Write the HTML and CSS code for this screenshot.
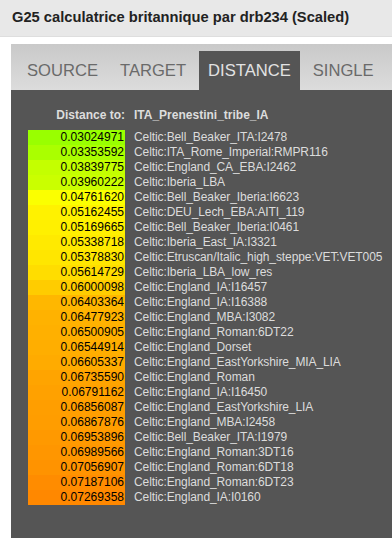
FILE: index.html
```html
<!DOCTYPE html>
<html>
    <head>
        <meta charset="utf-8">
        <title>G25 calculatrice britannique</title>
        <link rel="stylesheet" href="styles.css">
    </head>
    <body>
        <div class="topbar">G25 calculatrice britannique par drb234 (Scaled)</div>
        <div id="panel">
            <div class="tabs">
                <span class="tab">SOURCE</span>
                <span class="tab">TARGET</span>
                <span class="tab active">DISTANCE</span>
                <span class="tab">SINGLE</span>
            </div>
            <div class="content">
                <table class="dist">
                    <tr class="head"><th>Distance to:</th><th>ITA_Prenestini_tribe_IA</th></tr>
                    <tr><td class="val" style="background:hsl(84,100%,50%)">0.03024971</td><td>Celtic:Bell_Beaker_ITA:I2478</td></tr>
                    <tr><td class="val" style="background:hsl(80,100%,50%)">0.03353592</td><td>Celtic:ITA_Rome_Imperial:RMPR116</td></tr>
                    <tr><td class="val" style="background:hsl(74,100%,50%)">0.03839775</td><td>Celtic:England_CA_EBA:I2462</td></tr>
                    <tr><td class="val" style="background:hsl(72.5,100%,50%)">0.03960222</td><td>Celtic:Iberia_LBA</td></tr>
                    <tr><td class="val" style="background:hsl(61,100%,50%)">0.04761620</td><td>Celtic:Bell_Beaker_Iberia:I6623</td></tr>
                    <tr><td class="val" style="background:hsl(57,100%,50%)">0.05162455</td><td>Celtic:DEU_Lech_EBA:AITI_119</td></tr>
                    <tr><td class="val" style="background:hsl(56.5,100%,50%)">0.05169665</td><td>Celtic:Bell_Beaker_Iberia:I0461</td></tr>
                    <tr><td class="val" style="background:hsl(55,100%,50%)">0.05338718</td><td>Celtic:Iberia_East_IA:I3321</td></tr>
                    <tr><td class="val" style="background:hsl(54,100%,50%)">0.05378830</td><td>Celtic:Etruscan/Italic_high_steppe:VET:VET005</td></tr>
                    <tr><td class="val" style="background:hsl(52,100%,50%)">0.05614729</td><td>Celtic:Iberia_LBA_low_res</td></tr>
                    <tr><td class="val" style="background:hsl(48,100%,50%)">0.06000098</td><td>Celtic:England_IA:I16457</td></tr>
                    <tr><td class="val" style="background:hsl(43,100%,50%)">0.06403364</td><td>Celtic:England_IA:I16388</td></tr>
                    <tr><td class="val" style="background:hsl(42,100%,50%)">0.06477923</td><td>Celtic:England_MBA:I3082</td></tr>
                    <tr><td class="val" style="background:hsl(41.5,100%,50%)">0.06500905</td><td>Celtic:England_Roman:6DT22</td></tr>
                    <tr><td class="val" style="background:hsl(41,100%,50%)">0.06544914</td><td>Celtic:England_Dorset</td></tr>
                    <tr><td class="val" style="background:hsl(40.2,100%,50%)">0.06605337</td><td>Celtic:England_EastYorkshire_MIA_LIA</td></tr>
                    <tr><td class="val" style="background:hsl(38.5,100%,50%)">0.06735590</td><td>Celtic:England_Roman</td></tr>
                    <tr><td class="val" style="background:hsl(37.9,100%,50%)">0.06791162</td><td>Celtic:England_IA:I16450</td></tr>
                    <tr><td class="val" style="background:hsl(37.1,100%,50%)">0.06856087</td><td>Celtic:England_EastYorkshire_LIA</td></tr>
                    <tr><td class="val" style="background:hsl(36.9,100%,50%)">0.06867876</td><td>Celtic:England_MBA:I2458</td></tr>
                    <tr><td class="val" style="background:hsl(35.9,100%,50%)">0.06953896</td><td>Celtic:Bell_Beaker_ITA:I1979</td></tr>
                    <tr><td class="val" style="background:hsl(35.4,100%,50%)">0.06989566</td><td>Celtic:England_Roman:3DT16</td></tr>
                    <tr><td class="val" style="background:hsl(34.6,100%,50%)">0.07056907</td><td>Celtic:England_Roman:6DT18</td></tr>
                    <tr><td class="val" style="background:hsl(33,100%,50%)">0.07187106</td><td>Celtic:England_Roman:6DT23</td></tr>
                    <tr><td class="val" style="background:hsl(32,100%,50%)">0.07269358</td><td>Celtic:England_IA:I0160</td></tr>
                </table>
            </div>
        </div>
    </body>
</html>
```

FILE: styles.css
```css
html,body{margin:0; padding:0; overflow:hidden}
body{font-family:"Liberation Sans", Arial, sans-serif; background-color:#fff; color:#222; width:392px; height:538px}
.topbar{background-color:#e8e8e8; border-bottom:1px solid #dedede; height:36px; line-height:35px; padding-left:12px; font-size:14.7px; font-weight:bold; color:#222; white-space:nowrap}
#panel{margin:7px 0 0 11px}
.tabs{display:flex; gap:4px; height:46px; padding:7px 0 0 7px; box-sizing:border-box; background:linear-gradient(#c9c9c9, #dcdcdc); white-space:nowrap; overflow:hidden}
.tab{display:block; padding:0 9px; font-size:16.6px; line-height:39px; color:#6a6a6a}
.tab.active{background-color:#555; color:#e2e2e2}
.content{background-color:#555; height:430px; padding:18px 0 0 17px}
.dist{border-collapse:collapse; font-size:12px; line-height:15px}
.dist td, .dist th{padding:0; white-space:nowrap}
.head th{font-weight:bold; color:#ddd; height:15px; padding-bottom:7px}
.head th:first-child{text-align:right}
.head th:last-child{text-align:left; padding-left:9px}
.val{width:96px; text-align:right; color:#000; padding-right:1px !important; height:15px}
.dist td+td{color:#dcdcdc; padding-left:9px; letter-spacing:-0.1px}
```
